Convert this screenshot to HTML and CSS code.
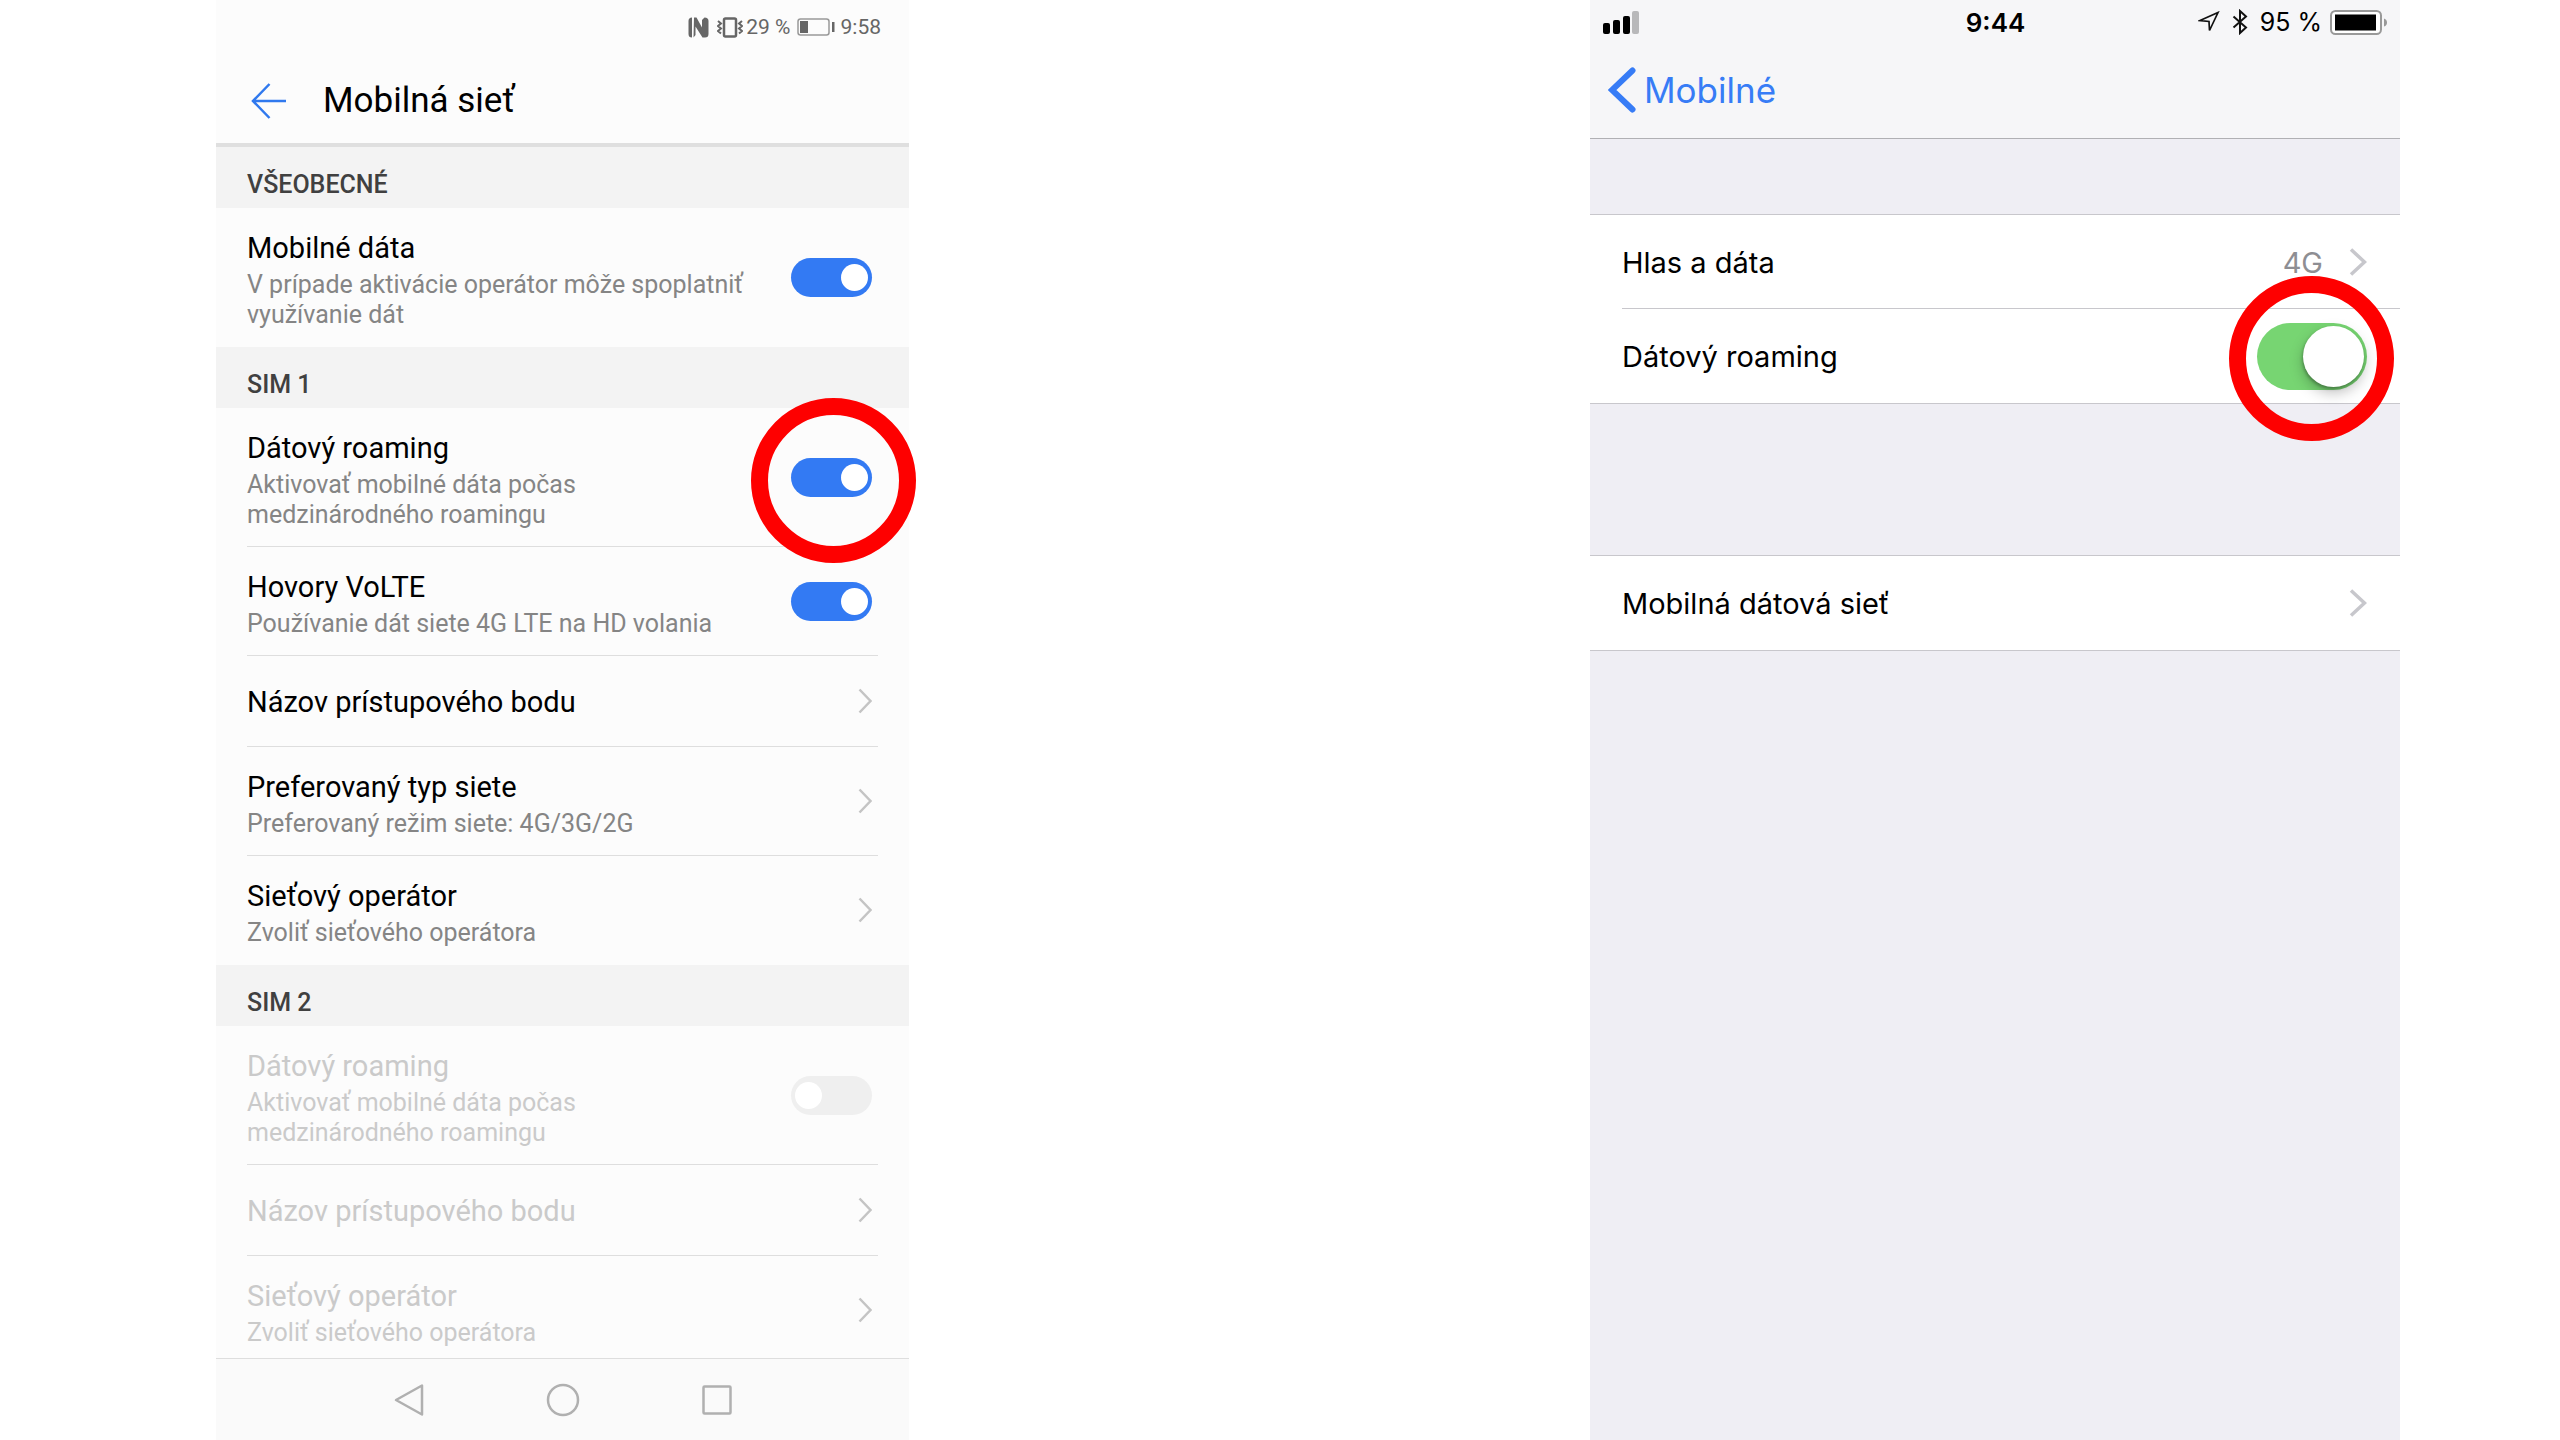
FILE: index.html
```html
<!DOCTYPE html>
<html lang="sk">
<head>
    <meta charset="UTF-8">
    <meta name="viewport" content="width=device-width, initial-scale=1.0">
    <title>Dátový roaming</title>
    <link rel="stylesheet" href="styles.css">
</head>
<body>
    <!-- spoločné ikony -->
    <svg class="sprite" aria-hidden="true">
        <symbol id="chevron" viewBox="0 0 14 26">
            <path d="M1.5 1.5 L12.5 13 L1.5 24.5" fill="none" stroke="currentColor" stroke-width="2.5"/>
        </symbol>
        <symbol id="chevron-ios" viewBox="0 0 18 28">
            <path d="M2 1.5 L15.5 14 L2 26.5" fill="none" stroke="currentColor" stroke-width="3.5"/>
        </symbol>
    </svg>

    <main class="screens">
        <!-- Android -->
        <section class="android">
            <header class="android-header">
                <div class="android-status">
                    <svg width="21" height="21" viewBox="0 0 21 21" aria-hidden="true">
                        <path d="M4 .5 Q.5 .5 .5 4 V17 Q.5 20.5 4 20.5 V.5 Z M6 .5 H8.5 L14 10.500 V3 L16.500 .5 Q20.500 .5 20.500 4 V17 Q20.500 20.500 17 20.500 H14.500 L7.500 9.500 V18 L5.500 20.500 Z" fill="#666"/>
                    </svg>
                    <svg class="vibrate" width="26" height="21" viewBox="0 0 26 21" aria-hidden="true">
                        <rect x="7" y="1.5" width="12" height="18" rx="1.5" fill="none" stroke="#666" stroke-width="2.5"/>
                        <path d="M1 4 l3 2.5 l-3 2.5 l3 2.5 l-3 2.5 l3 2.5 M25 4 l-3 2.5 l3 2.5 l-3 2.5 l3 2.5 l-3 2.5" fill="none" stroke="#666" stroke-width="2"/>
                    </svg>
                    <span>29 %</span>
                    <svg class="battery" width="38" height="18" viewBox="0 0 38 18" aria-hidden="true">
                        <rect x="1" y="1" width="31" height="16" rx="2.5" fill="none" stroke="#999" stroke-width="1.5"/>
                        <rect x="3" y="3" width="8" height="12" fill="#666"/>
                        <rect x="35" y="4" width="2.5" height="10" fill="#666"/>
                    </svg>
                    <span>9:58</span>
                </div>
                <div class="android-bar">
                    <button class="icon-btn" type="button" aria-label="Späť">
                        <svg width="36" height="36" viewBox="0 0 36 36">
                            <path d="M18.5 1 L2 18 L18.5 35 M2 18 H35" fill="none" stroke="#3079ee" stroke-width="2.5"/>
                        </svg>
                    </button>
                    <h1>Mobilná sieť</h1>
                </div>
            </header>

            <div class="android-list">
                <h2>VŠEOBECNÉ</h2>
                <ul>
                    <li class="row">
                        <label class="row-text" for="mobile-data">
                            <span class="row-title">Mobilné dáta</span>
                            <span class="row-sub">V prípade aktivácie operátor môže spoplatniť využívanie dát</span>
                        </label>
                        <input class="switch" type="checkbox" id="mobile-data" checked>
                    </li>
                </ul>

                <h2>SIM 1</h2>
                <ul>
                    <li class="row">
                        <label class="row-text" for="roaming-1">
                            <span class="row-title">Dátový roaming</span>
                            <span class="row-sub">Aktivovať mobilné dáta počas medzinárodného roamingu</span>
                        </label>
                        <span class="marked">
                            <input class="switch" type="checkbox" id="roaming-1" checked>
                            <span class="ring"></span>
                        </span>
                    </li>
                    <li class="row">
                        <label class="row-text" for="volte">
                            <span class="row-title">Hovory VoLTE</span>
                            <span class="row-sub">Používanie dát siete 4G LTE na HD volania</span>
                        </label>
                        <input class="switch" type="checkbox" id="volte" checked>
                    </li>
                    <li>
                        <a class="row" href="#">
                            <span class="row-text single">
                                <span class="row-title">Názov prístupového bodu</span>
                            </span>
                            <svg class="chevron"><use href="#chevron"/></svg>
                        </a>
                    </li>
                    <li>
                        <a class="row" href="#">
                            <span class="row-text">
                                <span class="row-title">Preferovaný typ siete</span>
                                <span class="row-sub">Preferovaný režim siete: 4G/3G/2G</span>
                            </span>
                            <svg class="chevron"><use href="#chevron"/></svg>
                        </a>
                    </li>
                    <li>
                        <a class="row" href="#">
                            <span class="row-text">
                                <span class="row-title">Sieťový operátor</span>
                                <span class="row-sub">Zvoliť sieťového operátora</span>
                            </span>
                            <svg class="chevron"><use href="#chevron"/></svg>
                        </a>
                    </li>
                </ul>

                <h2>SIM 2</h2>
                <ul class="disabled">
                    <li class="row">
                        <label class="row-text" for="roaming-2">
                            <span class="row-title">Dátový roaming</span>
                            <span class="row-sub">Aktivovať mobilné dáta počas medzinárodného roamingu</span>
                        </label>
                        <input class="switch" type="checkbox" id="roaming-2" disabled>
                    </li>
                    <li>
                        <a class="row" aria-disabled="true">
                            <span class="row-text single">
                                <span class="row-title">Názov prístupového bodu</span>
                            </span>
                            <svg class="chevron"><use href="#chevron"/></svg>
                        </a>
                    </li>
                    <li>
                        <a class="row" aria-disabled="true">
                            <span class="row-text">
                                <span class="row-title">Sieťový operátor</span>
                                <span class="row-sub">Zvoliť sieťového operátora</span>
                            </span>
                            <svg class="chevron"><use href="#chevron"/></svg>
                        </a>
                    </li>
                </ul>
            </div>

            <nav class="android-nav">
                <button class="icon-btn" type="button" aria-label="Späť">
                    <svg width="34" height="34" viewBox="0 0 34 34"><path d="M30 2.5 V31.500 L4 17 Z"/></svg>
                </button>
                <button class="icon-btn" type="button" aria-label="Domov">
                    <svg width="34" height="34" viewBox="0 0 34 34"><circle cx="17" cy="17" r="15"/></svg>
                </button>
                <button class="icon-btn" type="button" aria-label="Aplikácie">
                    <svg width="34" height="34" viewBox="0 0 34 34"><rect x="3.5" y="3.5" width="27" height="27" rx="1"/></svg>
                </button>
            </nav>
        </section>

        <!-- iPhone -->
        <section class="ios">
            <header class="ios-header">
                <div class="ios-status">
                    <svg width="37" height="23" viewBox="0 0 37 23" aria-hidden="true">
                        <rect x="0" y="12" width="7" height="11" rx="2"/>
                        <rect x="10" y="9" width="7" height="14" rx="2"/>
                        <rect x="20" y="5" width="7" height="18" rx="2"/>
                        <rect x="29" y="0" width="7" height="23" rx="2" fill="#b8b8ba"/>
                    </svg>
                    <span class="ios-time">9:44</span>
                    <div class="ios-status-right">
                        <svg width="22" height="22" viewBox="0 0 22 22" aria-hidden="true">
                            <path d="M2 9.500 L20 1.500 L11.500 19.500 L11 10.500 Z" fill="none" stroke="#111" stroke-width="1.7"/>
                        </svg>
                        <svg width="16" height="26" viewBox="0 0 16 26" aria-hidden="true">
                            <path d="M1.5 7.5 L14 18.500 L8 24 V2 L14 7.5 L1.5 18.500" fill="none" stroke="#111" stroke-width="2"/>
                        </svg>
                        <span>95 %</span>
                        <svg width="58" height="25" viewBox="0 0 58 25" aria-hidden="true">
                            <rect x="1" y="1" width="50" height="23" rx="4.5" fill="#fff" stroke="#999" stroke-width="2"/>
                            <rect x="5" y="4.5" width="41" height="16" fill="#000"/>
                            <path d="M54 8.500 Q57 9.500 57 12.500 Q57 15.500 54 16.500 Z" fill="#999"/>
                        </svg>
                    </div>
                </div>
                <a class="ios-back" href="#">
                    <svg width="28" height="46" viewBox="0 0 28 46" aria-hidden="true">
                        <path d="M24.500 3.500 L4 23 L24.500 42.500" fill="none" stroke="currentColor" stroke-width="6" stroke-linecap="round"/>
                    </svg>
                    Mobilné
                </a>
            </header>

            <ul class="ios-group">
                <li>
                    <a class="ios-row" href="#">
                        <span class="ios-label">Hlas a dáta</span>
                        <span class="ios-value">4G</span>
                        <svg class="chevron-ios"><use href="#chevron-ios"/></svg>
                    </a>
                </li>
                <li class="ios-row">
                    <label class="ios-label" for="ios-roaming">Dátový roaming</label>
                    <span class="marked">
                        <input class="ios-switch" type="checkbox" id="ios-roaming" checked>
                        <span class="ring"></span>
                    </span>
                </li>
            </ul>

            <ul class="ios-group">
                <li>
                    <a class="ios-row" href="#">
                        <span class="ios-label">Mobilná dátová sieť</span>
                        <svg class="chevron-ios"><use href="#chevron-ios"/></svg>
                    </a>
                </li>
            </ul>
        </section>
    </main>
</body>
</html>
```

FILE: styles.css
```css
* {
    box-sizing: border-box;
}

body {
    margin: 0;
    background: #fff;
}

h1, h2, ul {
    margin: 0;
    padding: 0;
    font-weight: 400;
}

ul {
    list-style: none;
}

a {
    color: inherit;
    text-decoration: none;
}

svg {
    display: block;
    flex-shrink: 0;
}

.sprite {
    display: none;
}

.screens {
    display: grid;
    grid-template-columns: 216fr 693fr 681fr 810fr 160fr;
    grid-template-rows: minmax(0, 1fr);
    height: 100vh;
}

.icon-btn {
    padding: 0;
    border: none;
    background: none;
    cursor: pointer;
}

/* Android */
.android {
    grid-column: 2;
    display: flex;
    flex-direction: column;
    min-width: 0;
    background: #fcfcfc;
    font-family: Roboto, "Noto Sans", sans-serif;
    color: #000;
}

.android-header {
    border-bottom: 4px solid #dfdfdf;
}

.android-status {
    display: flex;
    justify-content: flex-end;
    align-items: center;
    height: 54px;
    padding-right: 28px;
    font-size: 21px;
    color: #666;
}

.vibrate {
    margin: 0 3px 0 8px;
}

.battery {
    margin: 0 6px;
}

.android-bar {
    display: flex;
    align-items: center;
    gap: 36px;
    padding: 26px 35px 22px;
}

.android-bar h1 {
    font-size: 35px;
    line-height: 41px;
}

/* zoznam je pri spodnom okraji orezaný lištou */
.android-list {
    flex: 1;
    min-height: 0;
    overflow-x: visible;
    overflow-y: clip;
}

.android-list h2 {
    padding: 24px 31px 9px;
    background: #f3f3f3;
    color: #404040;
    font-size: 25px;
    font-weight: 500;
    line-height: 28px;
}

.row {
    display: flex;
    align-items: center;
    justify-content: space-between;
    gap: 30px;
    margin: 0 31px;
    padding-right: 6px;
    border-bottom: 1px solid #dedede;
}

li.row:last-child,
li:last-child .row {
    border-color: transparent;
}

.row-text {
    display: flex;
    flex-direction: column;
    gap: 4px;
    padding: 22px 0 16px;
}

.row-text.single {
    padding: 28px 0 26px;
}

.row-title {
    font-size: 29px;
    line-height: 36px;
}

.row-sub {
    font-size: 25px;
    line-height: 30px;
    color: #858585;
}

.disabled .row-title,
.disabled .row-sub {
    color: #cacaca;
}

.chevron {
    width: 14px;
    height: 26px;
    color: #c4c4c4;
}

.switch {
    appearance: none;
    display: block;
    flex-shrink: 0;
    width: 81px;
    height: 39px;
    margin: 0;
    padding: 6px 4px;
    border-radius: 20px;
    background: #efefef;
    cursor: pointer;
}

.switch::before {
    content: "";
    display: block;
    width: 27px;
    height: 27px;
    border-radius: 50%;
    background: #fff;
}

.switch:checked {
    background: #337af3;
}

.switch:checked::before {
    margin-left: auto;
}

.android-nav {
    display: flex;
    justify-content: center;
    gap: 120px;
    padding: 24px 0 23px;
    border-top: 1px solid #dedede;
    background: #fafafa;
}

.android-nav svg {
    fill: none;
    stroke: #b0b0b0;
    stroke-width: 2.5;
    stroke-linejoin: round;
}

/* červené zvýraznenie prepínača */
.marked {
    position: relative;
    flex-shrink: 0;
}

.ring {
    position: absolute;
    top: 50%;
    left: 50%;
    z-index: 1;
    width: 165px;
    height: 165px;
    margin: -79px 0 0 -81px;
    border: 17px solid #fe0000;
    border-radius: 50%;
    pointer-events: none;
}

/* iPhone */
.ios {
    grid-column: 4;
    min-width: 0;
    background: #efeef4;
    font-family: Inter, "Liberation Sans", sans-serif;
    color: #000;
}

.ios .ring {
    margin: -80px 0 0 -83px;
}

.ios-header {
    border-bottom: 1px solid #b0b0b4;
    background: #f6f6f8;
}

.ios-status {
    display: grid;
    grid-template-columns: 1fr auto 1fr;
    align-items: center;
    height: 44px;
    padding: 0 12px 0 13px;
}

.ios-time {
    font-size: 26px;
    font-weight: 600;
}

.ios-status-right {
    display: flex;
    align-items: center;
    justify-content: flex-end;
    gap: 8px;
    font-size: 25px;
}

.ios-status-right span {
    padding-left: 4px;
}

.ios-status-right svg:first-child {
    margin-right: 4px;
}

.ios-back {
    display: inline-flex;
    align-items: center;
    gap: 8px;
    padding: 23px 18px 25px;
    color: #377cf6;
    font-size: 35px;
    line-height: 46px;
}

.ios-group {
    margin-top: 75px;
    border: solid #c8c7cc;
    border-width: 1px 0;
    background: #fff;
}

.ios-group + .ios-group {
    margin-top: 151px;
}

.ios-row {
    display: flex;
    align-items: center;
    gap: 26px;
    height: 94px;
    margin-left: 32px;
    padding-right: 33px;
    border-bottom: 1px solid #c8c7cc;
}

li.ios-row:last-child,
li:last-child .ios-row {
    border-bottom: none;
}

.ios-label {
    flex: 1;
    font-size: 29px;
    line-height: 36px;
    padding-top: 2px;
}

.ios-value {
    color: #8e8e93;
    font-size: 29px;
    line-height: 36px;
    padding-top: 2px;
}

.chevron-ios {
    width: 18px;
    height: 28px;
    color: #c7c7cc;
}

.ios-switch {
    appearance: none;
    display: block;
    width: 110px;
    height: 67px;
    margin: 0;
    padding: 3px;
    border-radius: 34px;
    background: #e5e5ea;
    cursor: pointer;
}

.ios-switch::before {
    content: "";
    display: block;
    width: 61px;
    height: 61px;
    border-radius: 50%;
    background: #fff;
    box-shadow: 0 6px 14px rgba(0, 0, 0, 0.25), -1px 2px 3px rgba(0, 0, 0, 0.25);
}

.ios-switch:checked {
    background: #77d572;
}

.ios-switch:checked::before {
    margin-left: auto;
}
```
